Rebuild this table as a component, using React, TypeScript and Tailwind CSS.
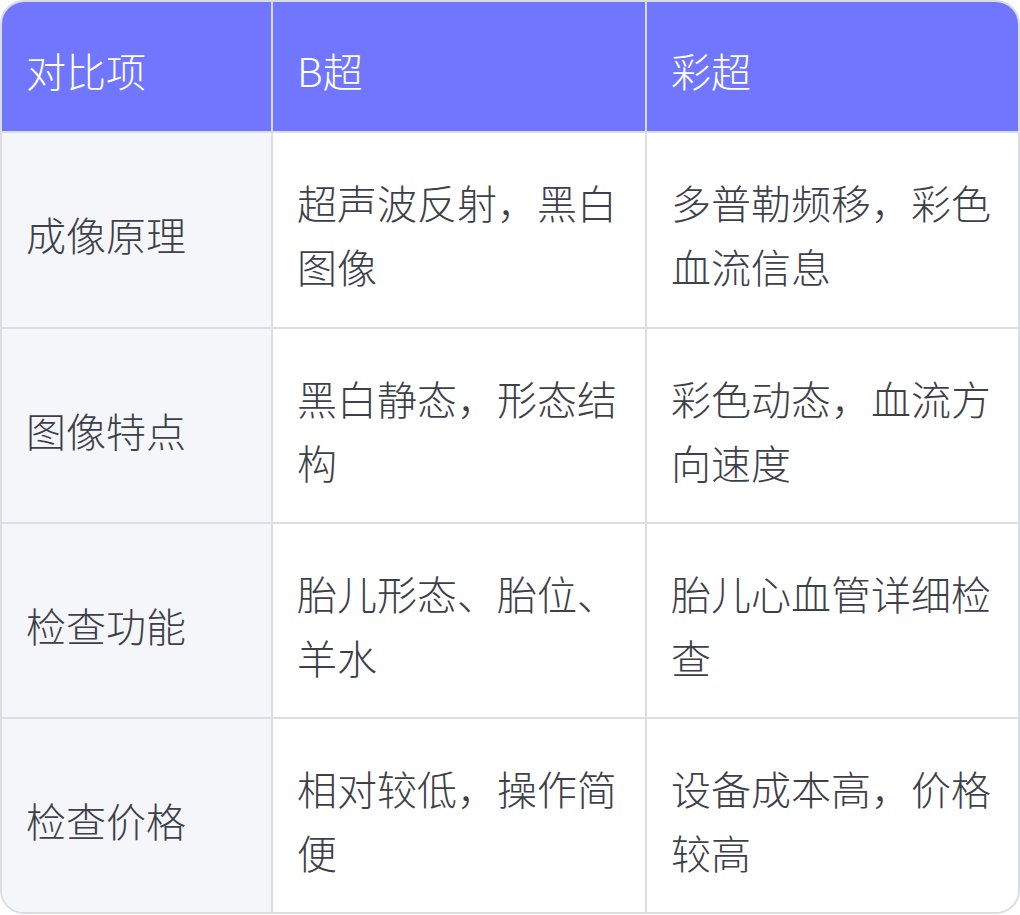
import React from 'react'

const rows = [
  ['成像原理', '超声波反射，黑白图像', '多普勒频移，彩色血流信息'],
  ['图像特点', '黑白静态，形态结构', '彩色动态，血流方向速度'],
  ['检查功能', '胎儿形态、胎位、羊水', '胎儿心血管详细检查'],
  ['检查价格', '相对较低，操作简便', '设备成本高，价格较高'],
]

const widths = ['w-[271px]', 'w-[374px]', 'w-[371px]']
const heights = ['h-[196px]', 'h-[195px]', 'h-[195px]', 'h-[193px]']

export default function App() {
  return (
    <div className="min-h-screen bg-white" style={{ fontFamily: '"Noto Sans CJK SC", "Noto Sans", sans-serif' }}>
      <div className="box-border w-[1020px] overflow-hidden rounded-[24px] border-2 border-[#dcdde2]">
        <div className="flex h-[131px] border-b-2 border-[#dcdde2] bg-[#7176ff] text-[40px] font-light leading-[65px] text-white">
          {['对比项', 'B超', '彩超'].map((h, i) => (
            <div
              key={h}
              className={`${widths[i]} box-border flex shrink-0 items-center px-6 pt-[8px] ${i < 2 ? 'border-r-2 border-[#d9dae3]' : ''}`}
            >
              {h}
            </div>
          ))}
        </div>
        {rows.map((r, ri) => (
          <div
            key={r[0]}
            className={`flex ${heights[ri]} text-[40px] font-light leading-[64px] text-[#3d4049] ${ri < rows.length - 1 ? 'border-b-2 border-[#dddee3]' : ''}`}
          >
            {r.map((c, i) => (
              <div
                key={i}
                className={`${widths[i]} box-border flex shrink-0 items-center px-6 pt-[8px] ${i === 0 ? 'bg-[#f5f6fa]' : 'bg-white'} ${i < 2 ? 'border-r-2 border-[#dddee3]' : ''}`}
              >
                <span>{c}</span>
              </div>
            ))}
          </div>
        ))}
      </div>
    </div>
  )
}
